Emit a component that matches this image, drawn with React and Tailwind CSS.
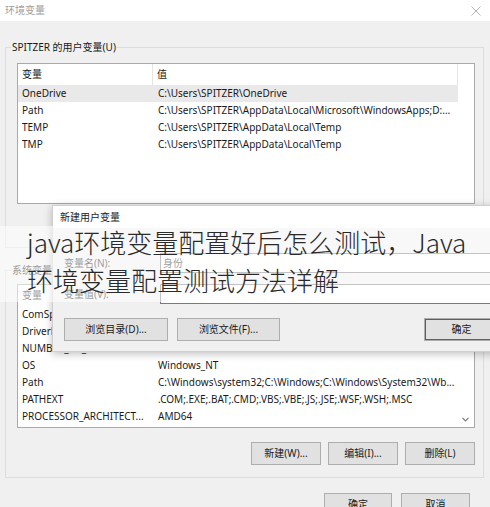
const ui = "font-['Noto_Sans','Noto_Sans_CJK_SC',sans-serif]"

const userVars = [
  ['OneDrive', 'C:\\Users\\SPITZER\\OneDrive'],
  ['Path', 'C:\\Users\\SPITZER\\AppData\\Local\\Microsoft\\WindowsApps;D:...'],
  ['TEMP', 'C:\\Users\\SPITZER\\AppData\\Local\\Temp'],
  ['TMP', 'C:\\Users\\SPITZER\\AppData\\Local\\Temp'],
]

const sysVars = [
  ['ComSpec', 'C:\\Windows\\system32\\cmd.exe'],
  ['DriverData', 'C:\\Windows\\System32\\Drivers\\DriverData'],
  ['NUMBER_OF_PROCESSORS', '4'],
  ['OS', 'Windows_NT'],
  ['Path', 'C:\\Windows\\system32;C:\\Windows;C:\\Windows\\System32\\Wb...'],
  ['PATHEXT', '.COM;.EXE;.BAT;.CMD;.VBS;.VBE;.JS;.JSE;.WSF;.WSH;.MSC'],
  ['PROCESSOR_ARCHITECT...', 'AMD64'],
]

const Btn = ({ children, className = '' }) => (
  <button className={`h-[23px] bg-[#e1e1e1] border border-[#adadad] text-[10px] text-[#1a1a1a] ${className}`}>
    {children}
  </button>
)

const VarList = ({ rows, height, selected, chevron }) => (
  <div className={`relative bg-white border border-[#a9a9a9] overflow-hidden ${height}`}>
    <div className="flex h-[21px] items-center text-[10px] text-[#1a1a1a]">
      <div className="w-[135px] pl-[4px] border-r border-[#e5e5e5] h-full flex items-center">变量</div>
      <div className="w-[305px] pl-[4px] border-r border-[#e5e5e5] h-full flex items-center">值</div>
    </div>
    {rows.map(([name, value], i) => (
      <div
        key={name + i}
        className={`flex h-[17px] w-[440px] items-center text-[10px] text-[#1a1a1a] whitespace-nowrap ${i === selected ? 'bg-[#e9e9e9]' : ''}`}
      >
        <div className="w-[135px] pl-[4px] overflow-hidden">{name}</div>
        <div className="w-[305px] pl-[5px] overflow-hidden">{value}</div>
      </div>
    ))}
    {chevron && (
      <svg className="absolute right-[5px] bottom-[5px]" width="7" height="5" viewBox="0 0 7 5">
        <path d="M0.5 0.8 L3.5 3.8 L6.5 0.8" fill="none" stroke="#7a7a7a" strokeWidth="1.2" />
      </svg>
    )}
  </div>
)

const Group = ({ title, children, className = '' }) => (
  <fieldset className={`ml-[5px] w-[479px] border border-[#dcdcdc] pl-[11px] pr-[8px] ${className}`}>
    <legend className="-ml-[6px] px-[1px] text-[10px] leading-[16px] text-[#1a1a1a]">{title}</legend>
    {children}
  </fieldset>
)

export default function App() {
  return (
    <div className={`relative w-[490px] h-[507px] overflow-hidden bg-[#f0f0f0] ${ui}`}>
      {/* window title */}
      <div className="h-[21px] bg-white flex items-center justify-between pl-[5px] pr-[9px]">
        <span className="text-[10px] text-[#a0a0a0]">环境变量</span>
        <svg width="10" height="10" viewBox="0 0 10 10">
          <path d="M0.5 0.5 L9.5 9.5 M9.5 0.5 L0.5 9.5" stroke="#b5b5b5" strokeWidth="1" />
        </svg>
      </div>

      <Group title="SPITZER 的用户变量(U)" className="mt-[18px] pt-[8px] pb-[10px]">
        <VarList rows={userVars} height="h-[141px]" selected={0} />
        <div className="mt-[10px] flex justify-end gap-[7px]">
          <Btn className="w-[70px]">新建(N)...</Btn>
          <Btn className="w-[70px]">编辑(E)...</Btn>
          <Btn className="w-[70px]">删除(D)</Btn>
        </div>
      </Group>

      <Group title="系统变量(S)" className="mt-[14px] pt-[6px] pb-[12px]">
        <VarList rows={sysVars} height="h-[144px]" chevron />
        <div className="mt-[14px] flex justify-end gap-[7px]">
          <Btn className="w-[70px] h-[22px]">新建(W)...</Btn>
          <Btn className="w-[70px] h-[22px]">编辑(I)...</Btn>
          <Btn className="w-[70px] h-[22px]">删除(L)</Btn>
        </div>
      </Group>

      <div className="mt-[15px] flex justify-end gap-[9px] pr-[20px]">
        <Btn className="w-[68px]">确定</Btn>
        <Btn className="w-[69px]">取消</Btn>
      </div>

      {/* new user variable dialog */}
      <div className="absolute left-[52px] top-[205px] w-[460px] h-[147px] bg-[#f0f0f0] border border-[#cfcfcf] shadow-[0_2px_8px_rgba(0,0,0,0.25)]">
        <div className="h-[22px] bg-white flex items-center pl-[7px] text-[10px] text-[#1a1a1a]">新建用户变量</div>
        <div className="pt-[25px] pl-[11px]">
          <div className="flex items-center h-[20px]">
            <div className="w-[96px] text-[10px] text-[#1a1a1a]">变量名(N):</div>
            <div className="flex-1 h-full bg-white border border-[#7a7a7a] flex items-center pl-[2px] text-[10px] text-[#1a1a1a]">身份</div>
          </div>
          <div className="mt-[11px] flex items-center h-[20px]">
            <div className="w-[96px] text-[10px] text-[#1a1a1a]">变量值(V):</div>
            <div className="flex-1 h-full bg-white border border-[#7a7a7a]"></div>
          </div>
          <div className="mt-[14px] flex">
            <Btn className="w-[104px]">浏览目录(D)...</Btn>
            <Btn className="ml-[9px] w-[103px]">浏览文件(F)...</Btn>
            <Btn className="ml-[144px] w-[75px] border-[#0078d7] shadow-[inset_0_0_0_1px_#0078d7]">确定</Btn>
          </div>
        </div>
      </div>

      {/* caption overlay */}
      <div className="absolute left-0 top-[226px] w-[490px] h-[76px] bg-white/55"></div>
      <div className="absolute left-0 top-[223px] w-[490px] pl-[27px] pr-[10px] text-[26px] leading-[38px] font-light text-[#2a2a2a] font-['Noto_Sans_CJK_SC','Noto_Sans',sans-serif]">
        java环境变量配置好后怎么测试，Java环境变量配置测试方法详解
      </div>
    </div>
  )
}
